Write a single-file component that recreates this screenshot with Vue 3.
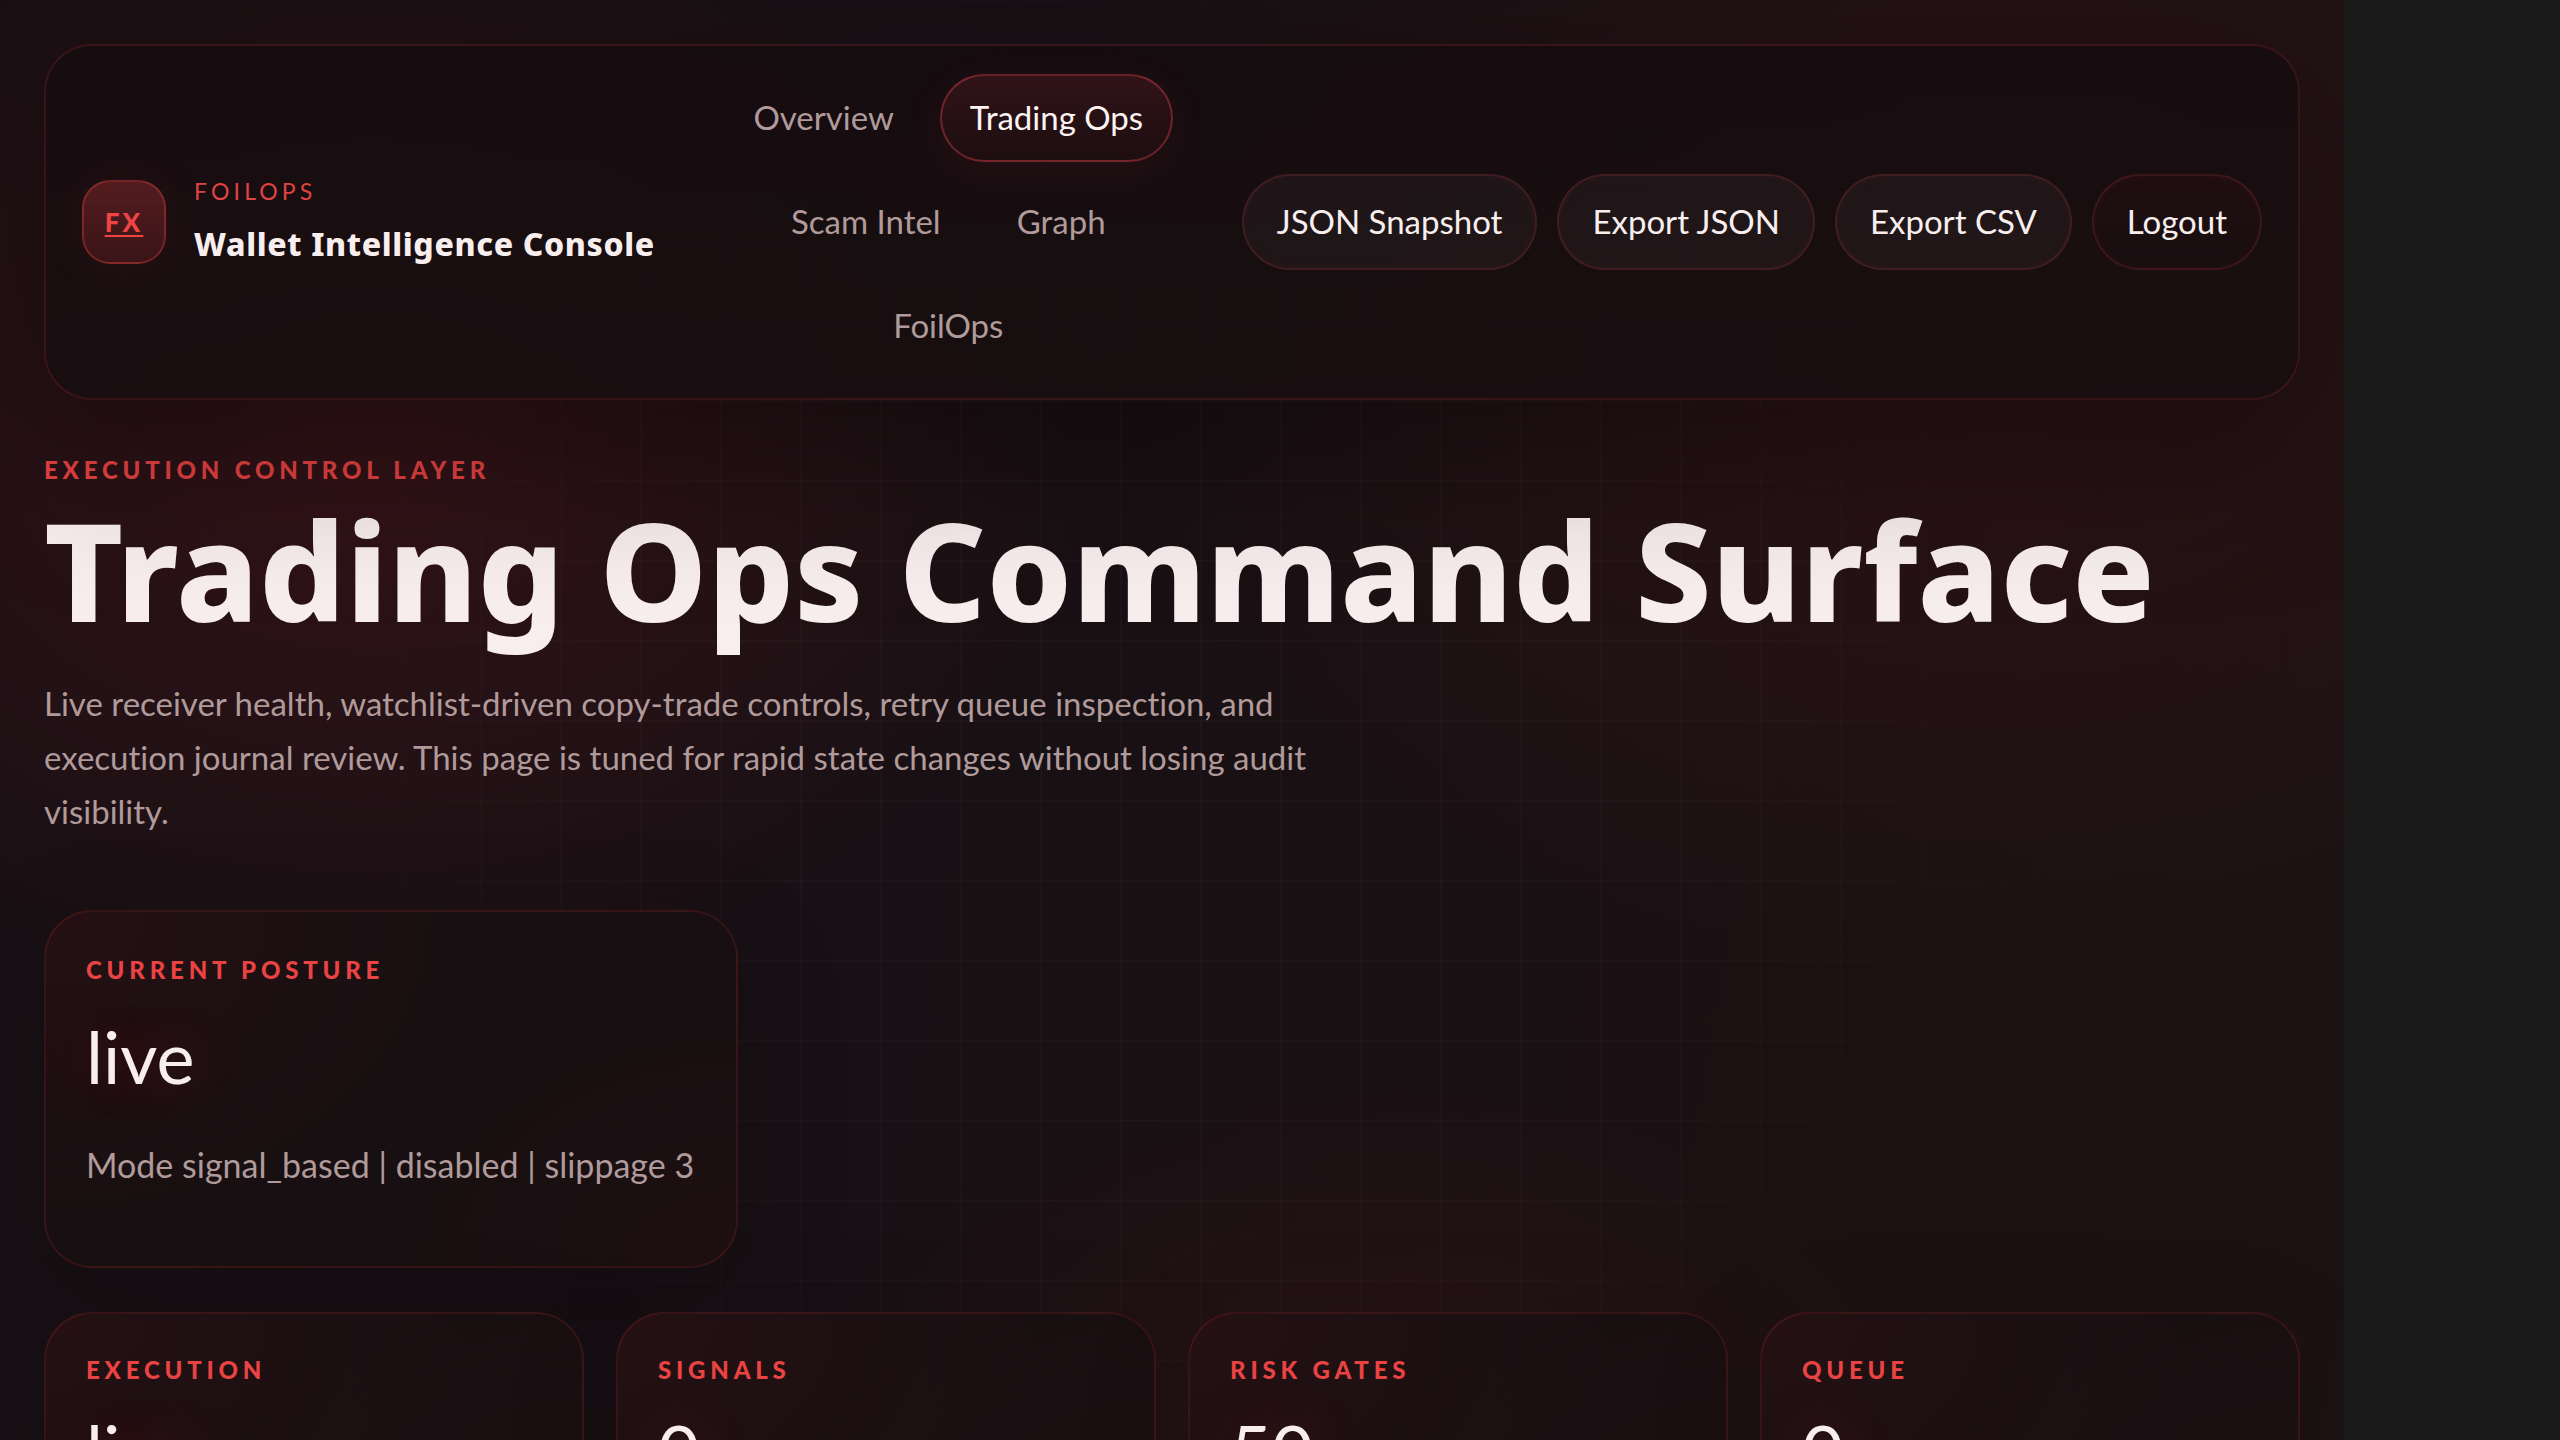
<script setup>
const navItems = [
  { label: 'Overview', active: false },
  { label: 'Trading Ops', active: true },
  { label: 'Scam Intel', active: false },
  { label: 'Graph', active: false },
  { label: 'FoilOps', active: false },
]

const actions = [
  { label: 'JSON Snapshot', quiet: false },
  { label: 'Export JSON', quiet: false },
  { label: 'Export CSV', quiet: false },
  { label: 'Logout', quiet: true },
]

const metrics = [
  { label: 'Execution', value: 'live' },
  { label: 'Signals', value: '0' },
  { label: 'Risk Gates', value: '50' },
  { label: 'Queue', value: '0' },
]
</script>

<template>
  <div class="app">
    <header class="topbar">
      <div class="brand">
        <a class="mark" href="#">FX</a>
        <div class="brand-text">
          <span class="brand-kicker">FoilOps</span>
          <strong class="brand-name">Wallet Intelligence Console</strong>
        </div>
      </div>
      <nav class="nav" aria-label="Primary">
        <a
          v-for="item in navItems"
          :key="item.label"
          href="#"
          class="nav-link"
          :class="{ active: item.active }"
        >{{ item.label }}</a>
      </nav>
      <div class="actions">
        <button
          v-for="action in actions"
          :key="action.label"
          type="button"
          class="action"
          :class="{ quiet: action.quiet }"
        >{{ action.label }}</button>
      </div>
    </header>

    <main>
      <section class="hero">
        <p class="eyebrow">Execution Control Layer</p>
        <h1 class="title">Trading Ops Command Surface</h1>
        <p class="lede">
          Live receiver health, watchlist-driven copy-trade controls, retry queue inspection, and
          execution journal review. This page is tuned for rapid state changes without losing audit
          visibility.
        </p>
        <article class="card posture">
          <h2 class="label">Current Posture</h2>
          <p class="value">live</p>
          <p class="detail">Mode signal_based | disabled | slippage 3</p>
        </article>
      </section>

      <section class="metrics">
        <article v-for="metric in metrics" :key="metric.label" class="card">
          <h2 class="label">{{ metric.label }}</h2>
          <p class="value">{{ metric.value }}</p>
        </article>
      </section>
    </main>
  </div>
</template>

<style>
body {
  background: #1a1a1a;
}
</style>

<style scoped>
.app {
  position: relative;
  isolation: isolate;
  box-sizing: border-box;
  min-height: 100vh;
  margin-right: 216px;
  padding: 44px 44px 0;
  overflow: hidden;
  color: #f8eeee;
  font-family: Lato, "Open Sans", sans-serif;
  font-size: 33px;
  font-variant-ligatures: none;
  background:
    radial-gradient(760px 560px at 16% 440px, rgba(150, 28, 34, 0.22), transparent),
    radial-gradient(900px 620px at 84% 340px, rgba(150, 28, 34, 0.14), transparent),
    radial-gradient(560px 360px at 58% 1440px, rgba(150, 34, 28, 0.12), transparent),
    linear-gradient(100deg, #181014 0%, #171014 40%, #1b1113 75%, #1c1213 100%);
}

.app::before {
  content: "";
  position: absolute;
  inset: 0;
  z-index: -1;
  background-image:
    linear-gradient(rgba(255, 255, 255, 0.022) 2px, transparent 2px),
    linear-gradient(90deg, rgba(255, 255, 255, 0.022) 2px, transparent 2px);
  background-size: 80px 80px;
  mask-image: radial-gradient(circle at center, #000 30%, transparent 68%);
}

h1,
h2,
p {
  margin: 0;
}

.topbar {
  position: relative;
  z-index: 2;
  display: flex;
  align-items: center;
  gap: 36px;
  padding: 28px 36px;
  border: 2px solid rgba(210, 50, 60, 0.18);
  border-radius: 48px;
  background: linear-gradient(180deg, rgba(22, 13, 16, 0.9), rgba(23, 14, 16, 0.86));
  box-shadow: 0 48px 160px rgba(0, 0, 0, 0.38);
}

.brand {
  display: flex;
  align-items: center;
  gap: 28px;
}

.mark {
  display: grid;
  place-items: center;
  box-sizing: border-box;
  width: 84px;
  height: 84px;
  border: 2px solid rgba(239, 68, 68, 0.32);
  border-radius: 28px;
  background: linear-gradient(180deg, #531c1f, #3a1417);
  box-shadow: 0 0 48px rgba(239, 68, 68, 0.08);
  color: #ef4444;
  font-size: 26px;
  font-weight: 900;
  letter-spacing: 0.12em;
  text-underline-offset: 3px;
}

.brand-text {
  display: flex;
  flex-direction: column;
  gap: 12px;
}

.brand-kicker {
  color: #e04343;
  font-size: 23px;
  line-height: 32px;
  letter-spacing: 0.18em;
  text-transform: uppercase;
}

.brand-name {
  font-family: "Noto Sans", sans-serif;
  font-size: 32px;
  font-weight: 800;
  line-height: 50px;
  letter-spacing: 0.02em;
  white-space: nowrap;
}

.nav {
  display: flex;
  flex: 1;
  flex-wrap: wrap;
  justify-content: center;
  gap: 16px;
}

.nav-link {
  padding: 0 28px 2px;
  border: 2px solid transparent;
  border-radius: 44px;
  color: #b09a9a;
  line-height: 82px;
  text-decoration: none;
  white-space: nowrap;
}

.nav-link.active {
  border-color: rgba(239, 68, 80, 0.36);
  background: linear-gradient(180deg, #301317, #1d0e11);
  box-shadow: 0 12px 48px rgba(239, 68, 68, 0.07);
  color: #fdf3f3;
}

.actions {
  display: flex;
  gap: 20px;
}

.action {
  height: 96px;
  padding: 0 33px 3px;
  border: 2px solid rgba(239, 68, 80, 0.16);
  border-radius: 48px;
  background: rgba(255, 255, 255, 0.035);
  box-shadow: inset 0 0 8px rgba(239, 68, 80, 0.06);
  color: #f8eeee;
  font: inherit;
  white-space: nowrap;
}

.action.quiet {
  background: linear-gradient(180deg, #1f0e12, #180e10);
}

.eyebrow,
.label {
  color: #e94343;
  font-size: 24px;
  font-weight: 900;
  letter-spacing: 0.2em;
  text-transform: uppercase;
}

.eyebrow {
  margin-top: 52px;
  line-height: 36px;
}

.title {
  margin-top: 10px;
  font-family: "Noto Sans", sans-serif;
  font-size: 136px;
  font-weight: 800;
  line-height: 144px;
}

.lede {
  max-width: 1320px;
  margin-top: 34px;
  color: #b09a9a;
  line-height: 54px;
}

.card {
  padding: 40px;
  border: 2px solid rgba(200, 50, 50, 0.17);
  border-radius: 48px;
  background:
    radial-gradient(420px 320px at 0 0, rgba(150, 30, 36, 0.11), transparent),
    radial-gradient(360px 260px at 100% 100%, rgba(150, 24, 32, 0.06), transparent),
    #170f11;
  box-shadow: 0 32px 120px rgba(0, 0, 0, 0.14);
}

.label {
  line-height: 32px;
}

.value {
  margin-top: 24px;
  font-size: 72px;
  line-height: 80px;
  text-shadow: 0 0 56px rgba(239, 68, 68, 0.3);
}

.posture {
  width: fit-content;
  margin-top: 72px;
  padding: 42px 42px 74px 40px;
}

.posture .value {
  margin-top: 30px;
}

.detail {
  margin-top: 42px;
  color: #b09a9a;
  font-size: 34px;
  line-height: 54px;
}

.metrics {
  display: grid;
  grid-template-columns: repeat(4, 1fr);
  gap: 32px;
  margin-top: 44px;
}
</style>
